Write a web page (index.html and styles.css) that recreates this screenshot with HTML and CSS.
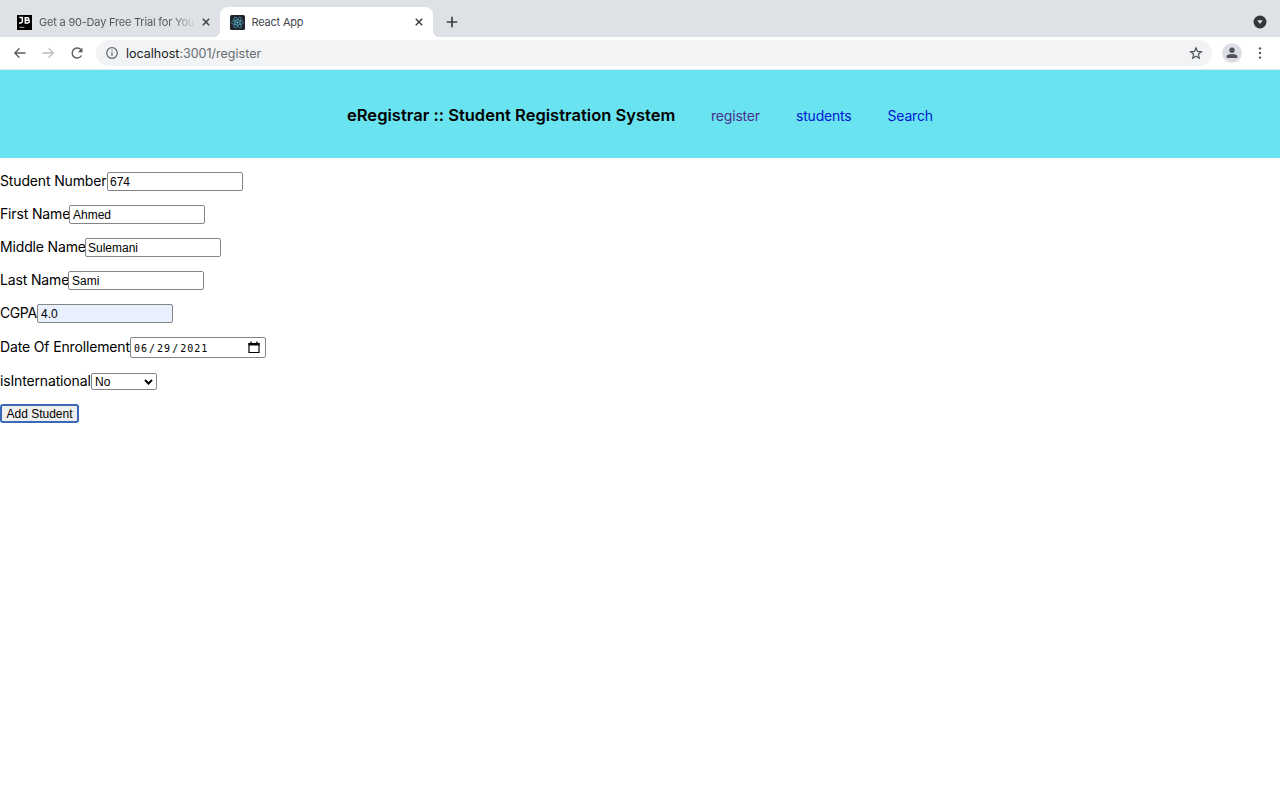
FILE: index.html
```html
<!DOCTYPE html>
<html lang="en">
<head>
<meta charset="utf-8">
<title>React App</title>
<link rel="stylesheet" href="styles.css">
</head>
<body>
<div class="tabstrip">
  <div class="tab tab-idle">
    <svg class="favicon" viewBox="0 0 15 15"><rect width="15" height="15" fill="#000"/><path d="M2.3 2.6h3v4q0 1.4-1.5 1.4H2M8.3 2.7v5.2h2.5q1.5 0 1.5-1.4t-1.5-1.3H8.3h2.2q1.3 0 1.3-1.3t-1.3-1.2z" fill="none" stroke="#fff" stroke-width="1.5"/><path d="M2.5 12.3h5" stroke="#ccc" stroke-width=".9"/></svg>
    <span class="tab-title title-long">Get a 90-Day Free Trial for You</span>
    <svg class="close" viewBox="0 0 8 8"><path d="M.8.8l6.4 6.4M7.2.8L.8 7.2" stroke="#3c4043" stroke-width="1.5"/></svg>
  </div>
  <div class="tab tab-active">
    <svg class="favicon" viewBox="0 0 15 15"><rect width="15" height="15" rx="1.5" fill="#20232a"/><g fill="none" stroke="#4b9fb8" stroke-width=".8"><ellipse cx="7.5" cy="7.5" rx="6" ry="2.3"/><ellipse cx="7.5" cy="7.5" rx="6" ry="2.3" transform="rotate(60 7.5 7.5)"/><ellipse cx="7.5" cy="7.5" rx="6" ry="2.3" transform="rotate(120 7.5 7.5)"/></g><circle cx="7.5" cy="7.5" r="1.1" fill="#61dafb"/></svg>
    <span class="tab-title title-short">React App</span>
    <svg class="close" viewBox="0 0 8 8"><path d="M.8.8l6.4 6.4M7.2.8L.8 7.2" stroke="#3c4043" stroke-width="1.5"/></svg>
  </div>
  <svg class="new-tab" viewBox="0 0 12 12"><path d="M6 .7v10.6M.7 6h10.6" stroke="#3c4043" stroke-width="1.7"/></svg>
  <svg class="tab-search" viewBox="0 0 14 14"><circle cx="7" cy="7" r="6.5" fill="#35363a"/><path d="M4.3 5.3h5.4L7 9z" fill="#dee1e6"/></svg>
</div>
<div class="toolbar">
  <svg class="nav-icon" viewBox="0 0 14 14"><path d="M12.5 7H2M6.5 2.3L1.8 7l4.7 4.7" fill="none" stroke="#5a5d61" stroke-width="1.3"/></svg>
  <svg class="nav-icon" viewBox="0 0 14 14"><path d="M1.5 7H12M7.5 2.3L12.2 7l-4.7 4.7" fill="none" stroke="#b9bbbe" stroke-width="1.3"/></svg>
  <svg class="nav-icon" viewBox="0 0 14 14"><path d="M11.5 9.5A5 5 0 1 1 10.8 3.6" fill="none" stroke="#5a5d61" stroke-width="1.4"/><path d="M12.5 1.4v4.8H7.9z" fill="#5a5d61"/></svg>
  <div class="omnibox">
    <svg class="info" viewBox="0 0 12 12"><circle cx="6" cy="6" r="5.3" fill="none" stroke="#5f6368" stroke-width="1.2"/><path d="M6 5.3v3.6M6 3v1.3" stroke="#5f6368" stroke-width="1.2"/></svg>
    <span class="url"><b>localhost</b>:3001/register</span>
    <svg class="star" viewBox="0 0 14 14"><path d="M7 1.8l1.5 3.6 3.9.4-3 2.5.9 3.9L7 10.2l-3.3 2 .9-3.9-3-2.5 3.9-.4z" fill="none" stroke="#505357" stroke-width="1.2"/></svg>
  </div>
  <svg class="avatar" viewBox="0 0 20 20"><circle cx="10" cy="10" r="9.8" fill="#dcdde4"/><circle cx="10" cy="7.3" r="2.7" fill="#50535b"/><path d="M4.6 15v-1.2Q4.6 11 10 11t5.4 2.8V15z" fill="#50535b"/></svg>
  <svg class="menu" viewBox="0 0 4 14"><g fill="#505357"><circle cx="2" cy="2.4" r="1.2"/><circle cx="2" cy="7" r="1.2"/><circle cx="2" cy="11.6" r="1.2"/></g></svg>
</div>
<header class="banner">
  <h1 class="brand">eRegistrar :: Student Registration System</h1>
  <a class="link visited" href="#">register</a>
  <a class="link students" href="#">students</a>
  <a class="link search" href="#">Search</a>
</header>
<form class="form">
  <div class="row"><label class="w-number">Student Number</label><input class="field" value="674"></div>
  <div class="row"><label class="w-first">First Name</label><input class="field" value="Ahmed"></div>
  <div class="row"><label class="w-middle">Middle Name</label><input class="field" value="Sulemani"></div>
  <div class="row"><label class="w-last">Last Name</label><input class="field" value="Sami"></div>
  <div class="row"><label class="w-cgpa">CGPA</label><input class="field filled" value="4.0"></div>
  <div class="row row-date"><label class="w-date">Date Of Enrollement</label><div class="field date"><span>06</span><i>/</i><span>29</span><i>/</i><span>2021</span><svg class="calendar" viewBox="0 0 12 13"><path d="M1 2.5h10v9H1z" fill="none" stroke="#000" stroke-width="1.2"/><path d="M.5 2h11v2.5H.5zM2.3.5h1.4v2H2.3zM8.3.5h1.4v2H8.3z"/></svg></div></div>
  <div class="row row-select"><label class="w-intl">isInternational</label><div class="field select"><span>No</span><svg class="chevron" viewBox="0 0 9 6"><path d="M1 1l3.5 3.5L8 1" fill="none" stroke="#000" stroke-width="2"/></svg></div></div>
  <button class="submit" type="button">Add Student</button>
</form>
</body>
</html>
```
FILE: styles.css
```css
* { box-sizing: border-box; }
body { margin: 0; background: #fff; color: #000; font-family: Inter, "Liberation Sans", sans-serif; }
svg { display: block; flex: none; }

.tabstrip { height: 37px; background: #dee1e6; display: flex; align-items: flex-end; padding-left: 7px; }
.tab { height: 30px; display: flex; align-items: center; padding: 0 10px; font-size: 11px; color: #45484c; }
.tab-idle { width: 213px; }
.tab-active { width: 213px; background: #fff; border-radius: 8px 8px 0 0; position: relative; }
.tab-active::before, .tab-active::after { content: ""; position: absolute; bottom: 0; width: 7px; height: 7px; }
.tab-active::before { left: -7px; background: radial-gradient(circle at 0 0, #dee1e6 7px, #fff 7.5px); }
.tab-active::after { right: -7px; background: radial-gradient(circle at 100% 0, #dee1e6 7px, #fff 7.5px); }
.favicon { width: 15px; height: 15px; }
.tab-title { margin-left: 7px; white-space: nowrap; }
.title-long { letter-spacing: -0.2px; color: transparent; background: linear-gradient(90deg, #505357 86%, #d0d3d8 100%); background-clip: text; }
.title-short { margin-left: 6.5px; letter-spacing: -0.2px; }
.close { width: 8px; height: 8px; margin-left: auto; }
.new-tab { width: 12px; height: 12px; margin: 0 0 9px 13px; }
.tab-search { width: 14px; height: 14px; margin: 0 13px 8px auto; }

.toolbar { height: 33px; border-bottom: 1px solid #dcebee; display: flex; align-items: center; padding: 0 18px 0 12.5px; }
.nav-icon { width: 14px; height: 14px; margin-right: 14.5px; }
.omnibox { width: 1116px; height: 26px; margin-left: -2.5px; background: #f1f3f4; border-radius: 13px; display: flex; align-items: center; padding: 0 8.5px 0 10px; }
.info { width: 12px; height: 12px; }
.url { margin-left: 8.5px; font-size: 12.5px; color: #696c70; }
.url b { font-weight: 400; color: #202124; }
.star { width: 14px; height: 14px; margin-left: auto; }
.avatar { width: 20px; height: 20px; margin-left: 10px; }
.menu { width: 4px; height: 14px; margin-left: auto; }

.banner { height: 88px; background: #69e3ef; display: flex; align-items: center; padding: 3px 0 0 347px; }
.brand { margin: 0 0 1px; width: 364px; font-size: 16.5px; letter-spacing: 0.02px; font-weight: 600; white-space: nowrap; }
.link { color: #0018d4; font-size: 14px; letter-spacing: -0.2px; text-decoration: none; }
.visited { color: #4a2e91; width: 85px; }
.students { width: 91.5px; }

.form { padding-top: 14px; font-size: 14px; }
.row { height: 19px; margin-bottom: 14px; display: flex; align-items: center; white-space: nowrap; }
.row label { flex: none; margin-bottom: 2px; letter-spacing: -0.15px; }
.w-number { width: 107px; }
.w-first { width: 69px; }
.w-middle { width: 85px; }
.w-last { width: 68px; }
.w-cgpa { width: 37px; }
.row .w-cgpa { letter-spacing: -0.4px; }
.w-date { width: 130px; }
.w-intl { width: 91px; }
.field { width: 136px; height: 19px; border: 1px solid #858585; border-radius: 2px; background: #fff; padding: 0 2px 0 3px; font: 12px "Liberation Sans", sans-serif; color: #000; }
.w-number + .field, .w-middle + .field { padding-left: 2px; }
.field.filled { background: #e8f0fe; }
.row-date { height: 21px; margin-bottom: 15px; }
.field.date { height: 21px; display: flex; align-items: center; padding: 1px 5px 0 3px; font: 10px "DejaVu Sans Mono", monospace; letter-spacing: 1px; }
.date i { font-style: normal; padding: 0 1px; }
.calendar { width: 12px; height: 13px; margin: 0 0 1px auto; }
.row-select { height: 17px; }
.field.select { width: 66px; height: 17px; display: flex; align-items: center; justify-content: space-between; padding: 0 3px; }
.chevron { width: 9px; height: 6px; }
.submit { display: block; width: 79px; height: 19px; padding: 0; border: 2px solid #3b69b5; border-radius: 3px; background: #efefef; color: #000; font: 12px "Liberation Sans", sans-serif; }
```
